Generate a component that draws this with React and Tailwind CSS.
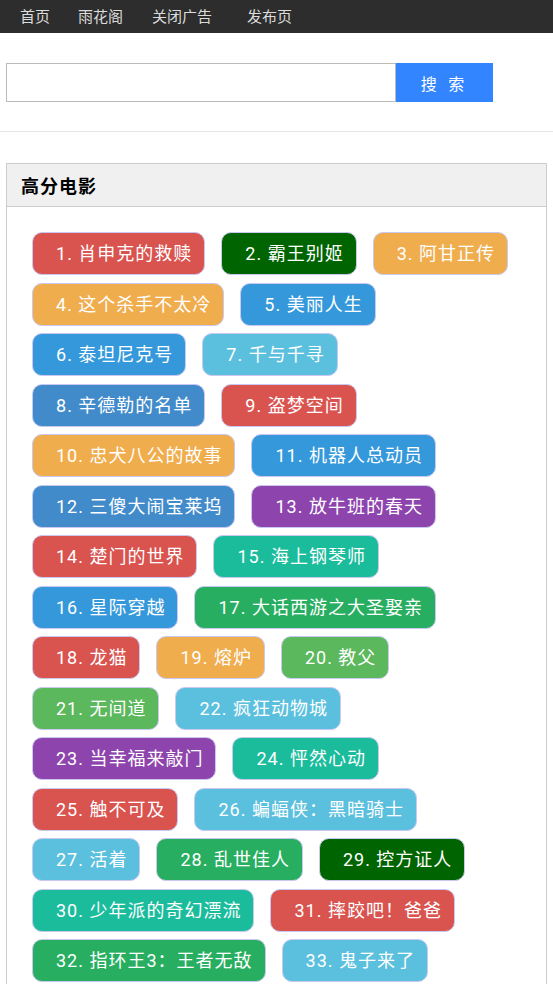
const movies = [
  ['肖申克的救赎', '#d9534f'],
  ['霸王别姬', '#006400'],
  ['阿甘正传', '#f0ad4e'],
  ['这个杀手不太冷', '#f0ad4e'],
  ['美丽人生', '#3498db'],
  ['泰坦尼克号', '#3498db'],
  ['千与千寻', '#5bc0de'],
  ['辛德勒的名单', '#428bca'],
  ['盗梦空间', '#d9534f'],
  ['忠犬八公的故事', '#f0ad4e'],
  ['机器人总动员', '#3498db'],
  ['三傻大闹宝莱坞', '#428bca'],
  ['放牛班的春天', '#8e44ad'],
  ['楚门的世界', '#d9534f'],
  ['海上钢琴师', '#1abc9c'],
  ['星际穿越', '#3498db'],
  ['大话西游之大圣娶亲', '#27ae60'],
  ['龙猫', '#d9534f'],
  ['熔炉', '#f0ad4e'],
  ['教父', '#5cb85c'],
  ['无间道', '#5cb85c'],
  ['疯狂动物城', '#5bc0de'],
  ['当幸福来敲门', '#8e44ad'],
  ['怦然心动', '#1abc9c'],
  ['触不可及', '#d9534f'],
  ['蝙蝠侠：黑暗骑士', '#5bc0de'],
  ['活着', '#5bc0de'],
  ['乱世佳人', '#27ae60'],
  ['控方证人', '#006400'],
  ['少年派的奇幻漂流', '#1abc9c'],
  ['摔跤吧！爸爸', '#d9534f'],
  ['指环王3：王者无敌', '#27ae60'],
  ['鬼子来了', '#5bc0de'],
];

export default function App() {
  return (
    <div className="min-h-screen bg-white font-['Roboto','Noto_Sans_CJK_SC',sans-serif]">
      {/* Top nav */}
      <nav className="h-[33px] bg-[#2d2d2d] flex items-center text-[15px] text-[#dcdcdc] font-['Noto_Sans_CJK_SC',sans-serif]">
        <a className="ml-[20px]">首页</a>
        <a className="ml-[28px]">雨花阁</a>
        <a className="ml-[29px]">关闭广告</a>
        <a className="ml-[35px]">发布页</a>
      </nav>

      {/* Search */}
      <div className="pt-[30px] pb-[29px] px-[6px] border-b border-[#e5e5e5]">
        <div className="flex h-[39px]">
          <input className="w-[390px] h-full border border-[#bbbbbb] outline-none px-2" />
          <button className="w-[97px] h-full bg-[#3385ff] text-white text-[16px] font-['Noto_Sans_CJK_SC',sans-serif] tracking-[4px]">
            搜 索
          </button>
        </div>
      </div>

      {/* Panel */}
      <div className="mt-[31px] mx-[6px] border border-[#cccccc]">
        <div className="h-[43px] bg-[#f0f0f0] border-b border-[#cccccc] flex items-center pl-[14px]">
          <h3 className="text-[18px] tracking-[1px] font-bold text-black font-['Noto_Sans_CJK_SC',sans-serif]">高分电影</h3>
        </div>
        <div className="pt-[25px] pl-[25px] pr-[25px] pb-[40px] flex flex-wrap gap-x-[16px] gap-y-[7.5px]">
          {movies.map(([name, color], i) => (
            <span
              key={i}
              className="h-[43px] flex items-center pl-[23px] pr-[12px] rounded-[10px] border border-[#c8c8f0] text-white text-[18px] tracking-[1px] whitespace-nowrap"
              style={{ backgroundColor: color }}
            >
              {i + 1}. {name}
            </span>
          ))}
        </div>
      </div>
    </div>
  );
}
